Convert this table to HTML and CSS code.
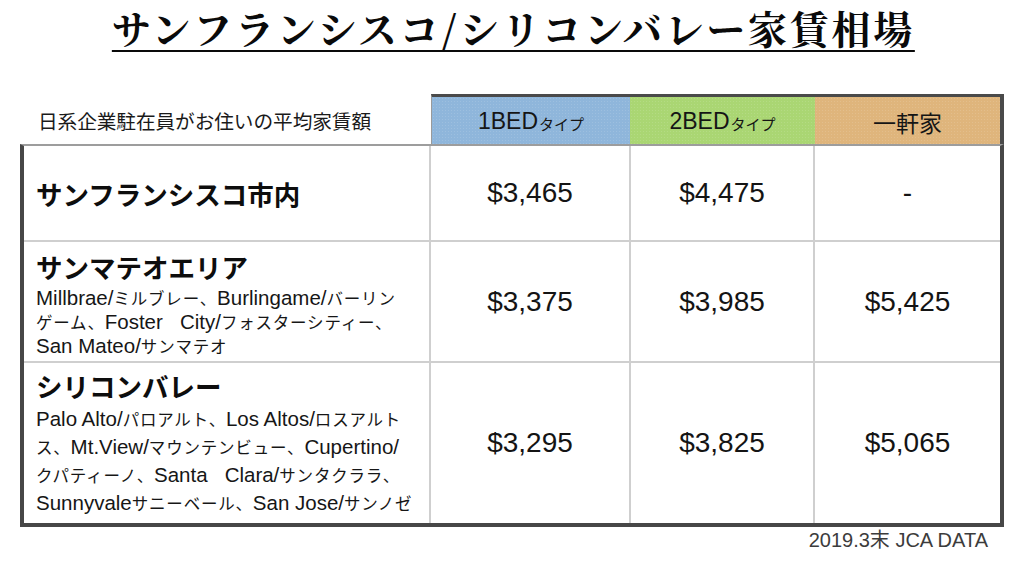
FILE: index.html
```html
<!DOCTYPE html>
<html lang="ja">
<head>
<meta charset="utf-8">
<title>サンフランシスコ/シリコンバレー家賃相場</title>
<link rel="stylesheet" href="styles.css">
</head>
<body>
<h1 class="title"><span class="title-text">サンフランシスコ/シリコンバレー家賃相場</span></h1>
<div class="sheet">
  <div class="head">
    <div class="caption">日系企業駐在員がお住いの平均家賃額</div>
    <div class="hcell blue">1BED<span class="small">タイプ</span></div>
    <div class="hcell green">2BED<span class="small">タイプ</span></div>
    <div class="hcell orange last">一軒家</div>
  </div>
  <div class="body">
    <div class="row row-sf">
      <div class="area"><div class="area-name">サンフランシスコ市内</div></div>
      <div class="price">$3,465</div>
      <div class="price">$4,475</div>
      <div class="price last">-</div>
    </div>
    <div class="row row-sm">
      <div class="area">
        <div class="area-name">サンマテオエリア</div>
        <div class="area-sub tight">Millbrae/<span class="ja">ミルブレー、</span>Burlingame/<span class="ja">バーリン</span><br><span class="ja">ゲーム、</span>Foster&nbsp;&nbsp;&nbsp;City/<span class="ja">フォスターシティー、</span><br>San Mateo/<span class="ja">サンマテオ</span></div>
      </div>
      <div class="price">$3,375</div>
      <div class="price">$3,985</div>
      <div class="price last">$5,425</div>
    </div>
    <div class="row row-sv">
      <div class="area">
        <div class="area-name">シリコンバレー</div>
        <div class="area-sub loose">Palo Alto/<span class="ja">パロアルト、</span>Los Altos/<span class="ja">ロスアルト</span><br><span class="ja">ス、</span>Mt.View/<span class="ja">マウンテンビュー、</span>Cupertino/<br><span class="ja">クパティーノ、</span>Santa&nbsp;&nbsp;&nbsp;Clara/<span class="ja">サンタクララ、</span><br>Sunnyvale<span class="ja">サニーベール、</span>San Jose/<span class="ja">サンノゼ</span></div>
      </div>
      <div class="price">$3,295</div>
      <div class="price">$3,825</div>
      <div class="price last">$5,065</div>
    </div>
  </div>
  <div class="source">2019.3末 JCA DATA</div>
</div>
</body>
</html>
```
FILE: styles.css
```css
* { box-sizing: border-box; }

html, body {
  margin: 0;
  padding: 0;
  background: #ffffff;
  color: #111111;
  font-family: "Liberation Sans", "Noto Sans CJK JP", sans-serif;
}

body {
  width: 1024px;
  height: 568px;
  overflow: hidden;
}

.title {
  margin: 5px 0 0;
  height: 47px;
  line-height: 44px;
  text-align: center;
  font-family: "Noto Serif CJK JP", "IPAexMincho", "IPAMincho", "Noto Sans CJK JP", serif;
  font-size: 39px;
  font-weight: 700;
  letter-spacing: 2.7px;
  color: #0a0a0a;
}

.title-text {
  text-decoration: underline;
  text-decoration-thickness: 2px;
  text-underline-offset: 6px;
  margin-right: -2.7px;
}

.sheet {
  margin: 42px 0 0 20px;
  width: 984px;
}

.head {
  display: grid;
  grid-template-columns: 411px 199px 185px 189px;
  height: 50px;
}

.caption {
  display: flex;
  align-items: center;
  padding: 3px 0 0 18px;
  font-family: "Noto Sans CJK JP", sans-serif;
  font-size: 19.7px;
  color: #1a1a1a;
  letter-spacing: -0.1px;
}

.hcell {
  display: flex;
  align-items: center;
  justify-content: center;
  border-top: 3px solid #4a4a4a;
  padding-top: 2px;
  font-family: "Liberation Sans", "Noto Sans CJK JP", sans-serif;
  font-size: 23px;
  color: #151515;
}

.hcell .small {
  font-family: "Noto Sans CJK JP", sans-serif;
  font-size: 15px;
  margin-left: 1px;
  padding-top: 4px;
}

.blue {
  background-color: #8fb6db;
  background-image: radial-gradient(rgba(255,255,255,0.12) 1px, transparent 1px);
  background-size: 3px 3px;
  border-left: 1px solid #9a9a9a;
}

.green {
  background-color: #aad673;
  background-image: radial-gradient(rgba(255,255,255,0.12) 1px, transparent 1px);
  background-size: 3px 3px;
}

.orange {
  background-color: #dfb57c;
  background-image: radial-gradient(rgba(255,255,255,0.12) 1px, transparent 1px);
  background-size: 3px 3px;
  font-family: "Noto Sans CJK JP", sans-serif;
  font-size: 23px;
}

.hcell.last {
  border-right: 4px solid #4a4a4a;
}

.body {
  border-top: 2px solid #9d9d9d;
  border-left: 4px solid #474747;
  border-right: 4px solid #474747;
  border-bottom: 4px solid #474747;
}

.row {
  display: grid;
  grid-template-columns: 407px 200px 184px 185px;
  border-bottom: 2px solid #cfcfcf;
}

.row:last-child {
  border-bottom: none;
}

.row-sf { height: 96px; }
.row-sm { height: 121px; }
.row-sv { height: 160px; }

.area {
  border-right: 2px solid #cfcfcf;
  padding: 0 0 0 12px;
  display: flex;
  flex-direction: column;
}

.row-sf .area {
  justify-content: center;
}

.row-sm .area { padding-top: 5px; }
.row-sv .area { padding-top: 4px; }

.area-name {
  font-family: "Noto Sans CJK JP", sans-serif;
  font-weight: 700;
  font-size: 26.5px;
  line-height: 39px;
  color: #0d0d0d;
}

.row-sv .area-name { line-height: 38px; }

.area-sub {
  font-family: "Liberation Sans", "Noto Sans CJK JP", sans-serif;
  font-size: 20.5px;
  color: #161616;
  white-space: nowrap;
}

.area-sub .ja {
  font-family: "Noto Sans CJK JP", sans-serif;
  font-size: 16.5px;
  letter-spacing: 0.8px;
}

.area-sub.tight { line-height: 24px; }
.area-sub.loose { line-height: 27px; }

.price {
  display: flex;
  align-items: center;
  justify-content: center;
  border-right: 2px solid #cfcfcf;
  font-family: "Liberation Sans", sans-serif;
  font-size: 28px;
  color: #141414;
}

.price.last {
  border-right: none;
}

.source {
  margin-top: 1px;
  padding-right: 16px;
  text-align: right;
  font-family: "Liberation Sans", "Noto Sans CJK JP", sans-serif;
  font-size: 20px;
  line-height: 24px;
  color: #3c3c3c;
}
```
